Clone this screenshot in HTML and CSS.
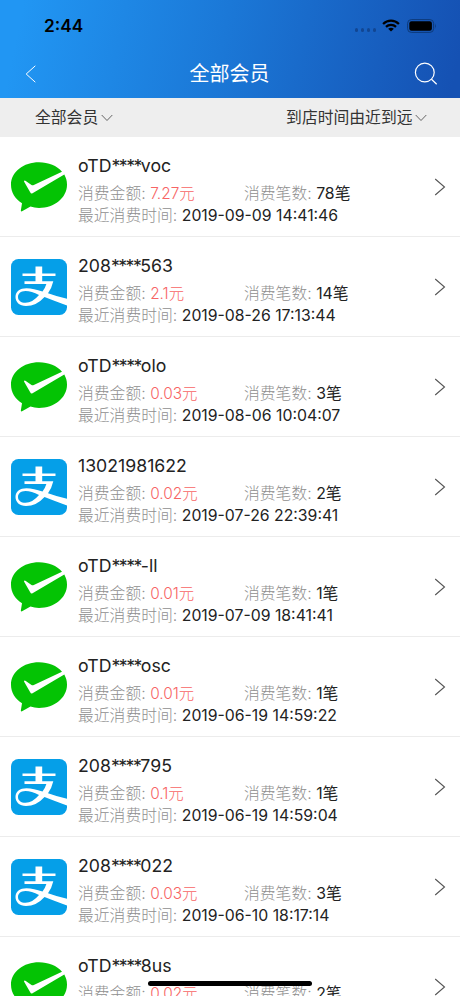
FILE: index.html
```html
<!DOCTYPE html>
<html lang="zh-CN">
<head>
<meta charset="utf-8">
<title>全部会员</title>
<link rel="stylesheet" href="styles.css">
</head>
<body>
<svg class="defs" width="0" height="0">
  <symbol id="wechat" viewBox="0 0 56 56">
    <path fill="#04c304" transform="translate(0 -.8)" d="M28 4C12.500 4 0 13.500 0 26.500C0 34 4 40.500 11 45L9.800 52.600Q10.100 53.800 11.500 52.800L19.500 48.400C22 49.200 25 49.700 28 49.700C43.500 49.700 56 39.500 56 26.500C56 22.500 55 19.500 53.300 16.300L21.500 35Q20 35.900 19.200 34L13 23.200Q13.200 21.700 14.800 22.700L20.500 26.700Q21.500 27.200 22.800 26.700L51 13.500C46 7.500 37.500 4 28 4Z"/>
  </symbol>
  <symbol id="alipay" viewBox="0 0 56 56">
    <rect width="56" height="56" rx="7.500" fill="#059fe8"/>
    <path fill="#fff" d="M24.500 7.500H31.200V14.400H44.500V17H31.200V22.300H42.300Q40.800 29 37 34.200Q46 37.500 56 39.700V46.500Q45 42.500 33.500 38Q25.500 47 15 47C8.500 47 4.500 43 4.500 38C4.500 32.500 9 29.200 15.500 29.200C20.500 29.200 25.500 30.500 31.500 32.500Q34.300 28.700 35.400 25H13.500V22.300H24.500V17H11.500V14.400H24.500ZM28 36Q20.500 32 14.500 32C9.500 32 7 34.800 7 38C7 41.500 10 43.800 14.500 43.800Q21.500 43.800 28 36Z"/>
  </symbol>
  <symbol id="right" viewBox="0 0 12 18"><path d="M1.200 1L10.500 9L1.200 17" fill="none" stroke="#555" stroke-width="1.100"/></symbol>
  <symbol id="down" viewBox="0 0 12 8"><path d="M.7 1L6 6.500L11.300 1" fill="none" stroke="#555" stroke-width=".9"/></symbol>
</svg>
<div class="screen">
  <header class="header">
    <div class="status">
      <span class="clock">2:44</span>
      <div class="indicators">
        <svg class="dots" width="21" height="4" viewBox="0 0 21 4" fill="#114693"><rect width="3" height="4" rx="1.500"/><rect x="6" width="3" height="4" rx="1.500"/><rect x="12" width="3" height="4" rx="1.500"/><rect x="18" width="3" height="4" rx="1.500"/></svg>
        <svg class="wifi" width="18" height="13" viewBox="0 0 20 14"><g fill="none" stroke="#000" stroke-width="2.500"><path d="M1.200 5.300Q5 1.600 10 1.600T18.800 5.300"/><path d="M4.400 8.500Q6.800 6.200 10 6.200T15.600 8.500"/></g><path d="M6.800 10.700Q10 8.300 13.200 10.700L10 13.800Z"/></svg>
        <svg class="battery" width="30" height="14" viewBox="0 0 30 14"><rect x=".6" y=".6" width="26" height="12.800" rx="3.700" fill="none" stroke="#0d3a7a"/><rect x="2.300" y="2.300" width="22.600" height="9.400" rx="2.200"/><path d="M28 4.500Q29.700 7 28 9.500Z" fill="#0d3a7a"/></svg>
      </div>
    </div>
    <div class="navbar">
      <svg class="back" width="12" height="18" viewBox="0 0 12 18"><path d="M10.300.8L1.200 9L10.300 17.200" fill="none" stroke="#fff" stroke-width="1"/></svg>
      <h1 class="title">全部会员</h1>
      <svg class="search" width="24" height="24" viewBox="0 0 24 24" fill="none" stroke="#fff" stroke-width="1.200"><circle cx="10.800" cy="10.500" r="9.400"/><path d="M17.500 17.200L22.700 22.200"/></svg>
    </div>
  </header>
  <nav class="filters">
    <div class="filter">全部会员<svg class="caret"><use href="#down"/></svg></div>
    <div class="filter">到店时间由近到远<svg class="caret"><use href="#down"/></svg></div>
  </nav>
  <main class="list" id="list"></main>
  <div class="home-bar"></div>
</div>
<script src="app.js"></script>
</body>
</html>
```
FILE: styles.css
```css
* { box-sizing: border-box; }
body {
  margin: 0;
  background: #fff;
  color: #222;
  font-family: Inter, "Noto Sans CJK SC", sans-serif;
}
.defs { display: block; }
.screen {
  position: relative;
  width: 460px;
  height: 996px;
  overflow: hidden;
  display: flex;
  flex-direction: column;
}
.header {
  flex: none;
  height: 98px;
  background: linear-gradient(102deg, #2196f3 5%, #1b78d7 48%, #1551b3 98%);
}
.status {
  height: 49px;
  padding: 2px 23px 0 44px;
  display: flex;
  align-items: center;
  justify-content: space-between;
}
.clock { font-size: 17.3px; font-weight: 600; color: #000; line-height: 22px; }
.indicators { display: flex; align-items: center; }
.dots { margin: 9px 6px 0 0; }
.wifi { margin-right: 7px; }
.navbar {
  height: 49px;
  padding: 0 22px 0 25px;
  display: flex;
  align-items: center;
  justify-content: space-between;
}
.back { margin-right: 8px; }
.title { margin: 0; color: #fff; font-size: 20px; font-weight: 400; line-height: 28px; }
.filters {
  flex: none;
  height: 39px;
  padding: 1px 33px 0 35px;
  background: #eee;
  display: flex;
  align-items: center;
  justify-content: space-between;
}
.filter { display: flex; align-items: center; font-size: 15.8px; line-height: 22px; color: #333; }
.caret { width: 12px; height: 8px; margin-left: 2.500px; }
.list { flex: none; }
.row {
  height: 100px;
  padding: 0 14px 0 11px;
  border-bottom: 1px solid #ececec;
  display: flex;
  align-items: center;
}
.logo { flex: none; width: 56px; height: 56px; margin-right: 11px; }
.info { flex: 1; padding-top: 5px; }
.name { font-size: 17.7px; line-height: 28px; height: 31px; white-space: nowrap; }
.mask { letter-spacing: -1.5px; }
.line { display: flex; font-size: 15.8px; line-height: 22px; height: 22px; white-space: nowrap; }
.amount-cell { width: 166px; }
.label { color: #8f8f8f; font-weight: 300; }
.value { margin-left: 4.500px; }
.amount { color: #f76464; font-size: 15.400px; font-weight: 300; }
.chevron { flex: none; width: 12px; height: 18px; }
.home-bar {
  position: absolute;
  left: 148px;
  bottom: 10px;
  width: 164px;
  height: 5px;
  border-radius: 3px;
  background: #000;
}
```
FILE: app.js
```js
const members = [
  ["wechat", "oTD****voc", "7.27", 78, "2019-09-09 14:41:46"],
  ["alipay", "208****563", "2.1", 14, "2019-08-26 17:13:44"],
  ["wechat", "oTD****olo", "0.03", 3, "2019-08-06 10:04:07"],
  ["alipay", "13021981622", "0.02", 2, "2019-07-26 22:39:41"],
  ["wechat", "oTD****-ll", "0.01", 1, "2019-07-09 18:41:41"],
  ["wechat", "oTD****osc", "0.01", 1, "2019-06-19 14:59:22"],
  ["alipay", "208****795", "0.1", 1, "2019-06-19 14:59:04"],
  ["alipay", "208****022", "0.03", 3, "2019-06-10 18:17:14"],
  ["wechat", "oTD****8us", "0.02", 2, ""]
];
document.getElementById("list").innerHTML = members.map(([type, name, amount, count, time]) => `
  <article class="row">
    <svg class="logo"><use href="#${type}"/></svg>
    <div class="info">
      <div class="name">${name.replace("****", '<span class="mask">****</span>')}</div>
      <div class="line">
        <div class="amount-cell"><span class="label">消费金额:</span><span class="value amount">${amount}元</span></div>
        <div><span class="label">消费笔数:</span><span class="value">${count}笔</span></div>
      </div>
      <div class="line">${time ? `<span class="label">最近消费时间:</span><span class="value">${time}</span>` : ""}</div>
    </div>
    <svg class="chevron"><use href="#right"/></svg>
  </article>`).join("");
```
